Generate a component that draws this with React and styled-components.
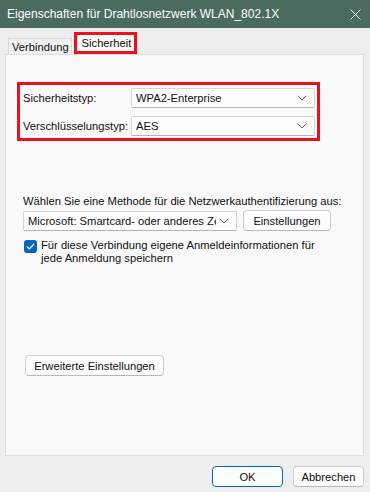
import styled, { createGlobalStyle } from "styled-components";

const Global = createGlobalStyle`
  html, body {
    margin: 0;
    padding: 0;
    background: #eeeeee;
  }
  * {
    box-sizing: border-box;
  }
`;

const Window = styled.div`
  width: 370px;
  height: 492px;
  display: flex;
  flex-direction: column;
  background: #eeeeee;
  font-family: "Segoe UI", "Liberation Sans", Arial, sans-serif;
  font-size: 11.2px;
  color: #111111;
  overflow: hidden;
`;

const TitleBar = styled.div`
  height: 28px;
  flex: none;
  display: flex;
  align-items: center;
  justify-content: space-between;
  padding: 0 8px 0 7px;
  background: #4b6b5f;
  color: #ffffff;
  font-size: 12px;
`;

const CloseButton = styled.span`
  display: flex;
  align-items: center;
  justify-content: center;
  width: 14px;
  height: 14px;
`;

const Body = styled.div`
  flex: 1;
  display: flex;
  flex-direction: column;
  padding: 4px 6px 0 5px;
`;

const TabStrip = styled.div`
  display: flex;
  align-items: flex-end;
  height: 22px;
  padding-left: 3px;
`;

const Tab = styled.div`
  height: ${(p) => (p.$active ? "22px" : "16px")};
  display: flex;
  align-items: center;
  padding: ${(p) => (p.$active ? "0 3px 0 5px" : "0 2px 0 3px")};
  background: ${(p) => (p.$active ? "#f9f9f9" : "#f0f0f0")};
  border: ${(p) => (p.$active ? "3px solid #e8111f" : "1px solid #d9d9d9")};
  border-bottom: ${(p) => (p.$active ? "3px solid #e8111f" : "none")};
  margin-left: ${(p) => (p.$active ? "2px" : "0")};
  position: relative;
  z-index: ${(p) => (p.$active ? 1 : 0)};
`;

const Panel = styled.div`
  height: 402px;
  background: #f9f9f9;
  border: 1px solid #dedede;
  padding: 27px 0 0 11px;
  display: flex;
  flex-direction: column;
`;

const Highlight = styled.div`
  width: 303px;
  border: 3px solid #e8111f;
  padding: 3px 2px 2px 3px;
  display: flex;
  flex-direction: column;
  gap: 8px;
`;

const FieldRow = styled.div`
  display: flex;
  align-items: center;
`;

const Label = styled.div`
  width: 108px;
  flex: none;
  white-space: nowrap;
`;

const Select = styled.div`
  width: ${(p) => p.$width}px;
  height: 20px;
  display: flex;
  align-items: center;
  justify-content: space-between;
  padding: 0 7px 0 4px;
  background: #fdfdfd;
  border: 1px solid #d4d4d4;
  border-bottom-color: #b4b4b4;
  border-radius: 2px;
  white-space: nowrap;
  overflow: hidden;
`;

const SelectText = styled.span`
  overflow: hidden;
  flex: 1;
  min-width: 0;
`;

const Chevron = () => (
  <svg width="10" height="6" viewBox="0 0 10 6" style={{ flex: "none", marginLeft: 3 }}>
    <path d="M0.8 0.8 L5 5 L9.2 0.8" fill="none" stroke="#5f5f5f" strokeWidth="1" />
  </svg>
);

const MethodSection = styled.div`
  margin-top: 53px;
  padding-left: 6px;
  display: flex;
  flex-direction: column;
`;

const MethodLabel = styled.div`
  height: 15px;
  line-height: 15px;
  white-space: nowrap;
`;

const MethodRow = styled.div`
  display: flex;
  align-items: center;
  gap: 6px;
  margin-top: 1px;
`;

const Button = styled.div`
  width: ${(p) => p.$width}px;
  height: 21px;
  display: flex;
  align-items: center;
  justify-content: center;
  background: #fdfdfd;
  border: 1px solid ${(p) => (p.$primary ? "#0067c0" : "#d0d0d0")};
  border-bottom-color: ${(p) => (p.$primary ? "#0067c0" : "#b9b9b9")};
  border-radius: 4px;
  white-space: nowrap;
`;

const CheckRow = styled.div`
  display: flex;
  align-items: flex-start;
  gap: 4px;
  margin-top: 8px;
  padding-left: 1px;
`;

const CheckBox = styled.span`
  width: 13px;
  height: 13px;
  flex: none;
  margin-top: 1px;
  background: #0067c0;
  border-radius: 3px;
  display: flex;
  align-items: center;
  justify-content: center;
`;

const CheckText = styled.div`
  line-height: 13px;
`;

const AdvancedWrap = styled.div`
  margin-top: 90px;
  padding-left: 2px;
`;

const Footer = styled.div`
  display: flex;
  justify-content: flex-end;
  gap: 10px;
  padding: 10px 0 0 0;
`;

export default function App() {
  return (
    <Window>
      <Global />
      <TitleBar>
        <span>Eigenschaften für Drahtlosnetzwerk WLAN_802.1X</span>
        <CloseButton>
          <svg width="11" height="11" viewBox="0 0 11 11">
            <path d="M0.5 0.5 L10.5 10.5 M10.5 0.5 L0.5 10.5" stroke="#ffffff" strokeWidth="1" />
          </svg>
        </CloseButton>
      </TitleBar>
      <Body>
        <TabStrip>
          <Tab>Verbindung</Tab>
          <Tab $active>Sicherheit</Tab>
        </TabStrip>
        <Panel>
          <Highlight>
            <FieldRow>
              <Label>Sicherheitstyp:</Label>
              <Select $width={185}>
                <SelectText>WPA2-Enterprise</SelectText>
                <Chevron />
              </Select>
            </FieldRow>
            <FieldRow>
              <Label>Verschlüsselungstyp:</Label>
              <Select $width={185}>
                <SelectText>AES</SelectText>
                <Chevron />
              </Select>
            </FieldRow>
          </Highlight>
          <MethodSection>
            <MethodLabel>Wählen Sie eine Methode für die Netzwerkauthentifizierung aus:</MethodLabel>
            <MethodRow>
              <Select $width={214}>
                <SelectText>Microsoft: Smartcard- oder anderes Zertifikat</SelectText>
                <Chevron />
              </Select>
              <Button $width={88}>Einstellungen</Button>
            </MethodRow>
            <CheckRow>
              <CheckBox>
                <svg width="9" height="7" viewBox="0 0 9 7">
                  <path d="M1 3.6 L3.4 6 L8 1" fill="none" stroke="#ffffff" strokeWidth="1.2" />
                </svg>
              </CheckBox>
              <CheckText>
                Für diese Verbindung eigene Anmeldeinformationen für
                <br />
                jede Anmeldung speichern
              </CheckText>
            </CheckRow>
            <AdvancedWrap>
              <Button $width={139}>Erweiterte Einstellungen</Button>
            </AdvancedWrap>
          </MethodSection>
        </Panel>
        <Footer>
          <Button $width={71} $primary>OK</Button>
          <Button $width={71}>Abbrechen</Button>
        </Footer>
      </Body>
    </Window>
  );
}
